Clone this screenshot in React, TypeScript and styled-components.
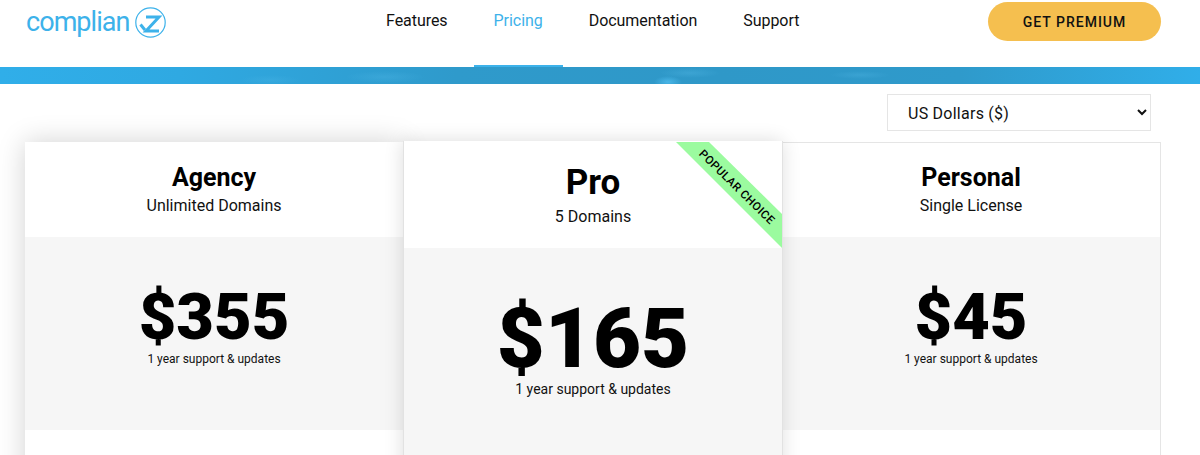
import React, { FC } from "react";
import styled, { createGlobalStyle } from "styled-components";

const GlobalStyle = createGlobalStyle`
  html, body {
    margin: 0;
    padding: 0;
    height: 455px;
    overflow: hidden;
    background: #fff;
    font-family: Roboto, "Liberation Sans", sans-serif;
    color: #000;
  }
`;

const Header = styled.header`
  height: 67px;
  display: flex;
  align-items: flex-start;
  padding: 0 39px 0 26px;
  background: #fff;
`;

const Logo = styled.a`
  display: flex;
  align-items: flex-start;
  gap: 5px;
  width: 340px;
  height: 48px;
  padding-top: 7px;
  box-sizing: border-box;
  color: #3db2ea;
`;

const LogoText = styled.span`
  font-family: Roboto, sans-serif;
  font-size: 27px;
  font-weight: 400;
  letter-spacing: -0.95px;
  line-height: 30px;
`;

const Nav = styled.nav`
  display: flex;
  flex: 1;
  gap: 6px;
  height: 67px;
`;

const NavItem = styled.a<{ $active?: boolean }>`
  box-sizing: border-box;
  height: 67px;
  padding: 0 20px;
  font-size: 16px;
  line-height: 41px;
  letter-spacing: -0.05px;
  color: ${(p) => (p.$active ? "#3db2ea" : "#111")};
  border-bottom: 2px solid ${(p) => (p.$active ? "#3db2ea" : "transparent")};
`;

const PremiumButton = styled.button`
  flex: none;
  width: 173px;
  height: 39px;
  margin-top: 2px;
  border: 0;
  border-radius: 20px;
  background: #f5bf4f;
  color: #111;
  font-family: Roboto, sans-serif;
  font-size: 14px;
  font-weight: 500;
  letter-spacing: 1px;
`;

const Band = styled.div`
  height: 17px;
  background:
    radial-gradient(ellipse 14px 6px at 668px 15px, rgba(90, 200, 250, 0.6), transparent),
    radial-gradient(ellipse 30px 5px at 690px 6px, rgba(90, 190, 235, 0.3), transparent),
    radial-gradient(ellipse 30px 4px at 860px 8px, rgba(90, 190, 235, 0.25), transparent),
    radial-gradient(ellipse 40px 6px at 385px 10px, rgba(90, 190, 235, 0.25), transparent),
    radial-gradient(ellipse 30px 5px at 270px 13px, rgba(90, 190, 235, 0.2), transparent),
    linear-gradient(
      90deg,
      #30aee9 0%,
      #2fa9e2 15%,
      #2f9acb 38%,
      #2f98c8 60%,
      #2f9acb 80%,
      #30aee9 100%
    );
`;

const Main = styled.main`
  padding: 10px 39px 0 25px;
`;

const CurrencyRow = styled.div`
  display: flex;
  justify-content: flex-end;
  padding-right: 10px;
  margin-bottom: 11px;
`;

const CurrencySelect = styled.select`
  box-sizing: border-box;
  width: 264px;
  height: 37px;
  padding: 1px 0 0 16px;
  border: 1px solid #e5e5e5;
  border-radius: 0;
  background: #fff;
  color: #111;
  font-family: Roboto, sans-serif;
  font-size: 16px;
  letter-spacing: 0.25px;
`;

const Plans = styled.div`
  display: grid;
  grid-template-columns: 378px 379px 379px;
  align-items: start;
`;

const Card = styled.section<{ $featured?: boolean; $plain?: boolean }>`
  position: relative;
  z-index: ${(p) => (p.$featured ? 2 : 1)};
  box-sizing: border-box;
  height: 400px;
  margin-top: ${(p) => (p.$featured ? -1 : 0)}px;
  background: #fff;
  border-top: ${(p) => (p.$plain ? "1px solid #e5e5e5" : "0")};
  border-right: ${(p) => (p.$plain ? "1px solid #e5e5e5" : "0")};
  border-left: ${(p) => (p.$featured ? "1px solid #e2e2e2" : "0")};
  box-shadow: ${(p) =>
    p.$plain
      ? "none"
      : p.$featured
      ? "1px 0 0 #e2e2e2, 0 0 18px rgba(0, 0, 0, 0.14)"
      : "0 0 26px rgba(0, 0, 0, 0.18)"};
`;

const CardHead = styled.div<{ $featured?: boolean; $plain?: boolean }>`
  box-sizing: border-box;
  height: ${(p) => (p.$featured ? 107 : p.$plain ? 94 : 95)}px;
  padding-top: ${(p) => (p.$featured ? 21 : p.$plain ? 20 : 21)}px;
  text-align: center;
`;

const PlanName = styled.h2<{ $featured?: boolean }>`
  margin: 0;
  font-size: ${(p) => (p.$featured ? 35 : 25)}px;
  font-weight: 700;
  line-height: ${(p) => (p.$featured ? 42 : 30)}px;
`;

const PlanDomains = styled.p`
  margin: 2px 0 0;
  font-size: 16px;
  line-height: 22px;
  color: #111;
`;

const PriceBlock = styled.div<{ $featured?: boolean }>`
  box-sizing: border-box;
  height: ${(p) => (p.$featured ? 230 : 193)}px;
  padding-top: ${(p) => (p.$featured ? 49 : 48)}px;
  background: #f6f6f6;
  text-align: center;
`;

const Price = styled.div<{ $featured?: boolean }>`
  font-size: ${(p) => (p.$featured ? 83 : 65)}px;
  font-weight: 900;
  line-height: ${(p) => (p.$featured ? 83 : 65)}px;
`;

const Support = styled.div<{ $featured?: boolean }>`
  font-size: ${(p) => (p.$featured ? 14 : 12)}px;
  line-height: 18px;
  color: #111;
`;

const Ribbon = styled.div`
  position: absolute;
  top: 1px;
  right: 0;
  width: 106px;
  height: 106px;
  background: #9bfb9f;
  clip-path: polygon(0 0, 33px 0, 106px 72px, 106px 106px);
`;

const RibbonText = styled.span`
  position: absolute;
  top: 38px;
  left: 5px;
  width: 112px;
  text-align: center;
  transform: rotate(44.5deg);
  font-size: 11.5px;
  font-weight: 500;
  line-height: 14px;
  letter-spacing: 0.4px;
`;

const LogoMark: FC = () => (
  <svg width="31" height="31" viewBox="0 0 31 31" fill="none">
    <circle cx="15.5" cy="15.5" r="14.7" stroke="#3db2ea" strokeWidth="1.2" />
    <path d="M11 10h13L11 24h13" stroke="#3db2ea" strokeWidth="3" />
    <path d="M5.5 17.5L10 23" stroke="#3db2ea" strokeWidth="3" />
  </svg>
);

const plans = [
  { name: "Agency", domains: "Unlimited Domains", price: "$355" },
  { name: "Pro", domains: "5 Domains", price: "$165", featured: true },
  { name: "Personal", domains: "Single License", price: "$45", plain: true },
];

const App: FC = () => {
  return (
    <>
      <GlobalStyle />
      <Header>
        <Logo>
          <LogoText>complian</LogoText>
          <LogoMark />
        </Logo>
        <Nav>
          <NavItem>Features</NavItem>
          <NavItem $active>Pricing</NavItem>
          <NavItem>Documentation</NavItem>
          <NavItem>Support</NavItem>
        </Nav>
        <PremiumButton>GET PREMIUM</PremiumButton>
      </Header>
      <Band />
      <Main>
        <CurrencyRow>
          <CurrencySelect defaultValue="usd">
            <option value="usd">US Dollars ($)</option>
          </CurrencySelect>
        </CurrencyRow>
        <Plans>
          {plans.map((plan) => (
            <Card key={plan.name} $featured={plan.featured} $plain={plan.plain}>
              <CardHead $featured={plan.featured} $plain={plan.plain}>
                <PlanName $featured={plan.featured}>{plan.name}</PlanName>
                <PlanDomains>{plan.domains}</PlanDomains>
              </CardHead>
              <PriceBlock $featured={plan.featured}>
                <Price $featured={plan.featured}>{plan.price}</Price>
                <Support $featured={plan.featured}>1 year support &amp; updates</Support>
              </PriceBlock>
              {plan.featured && (
                <Ribbon>
                  <RibbonText>POPULAR CHOICE</RibbonText>
                </Ribbon>
              )}
            </Card>
          ))}
        </Plans>
      </Main>
    </>
  );
};

export default App;
